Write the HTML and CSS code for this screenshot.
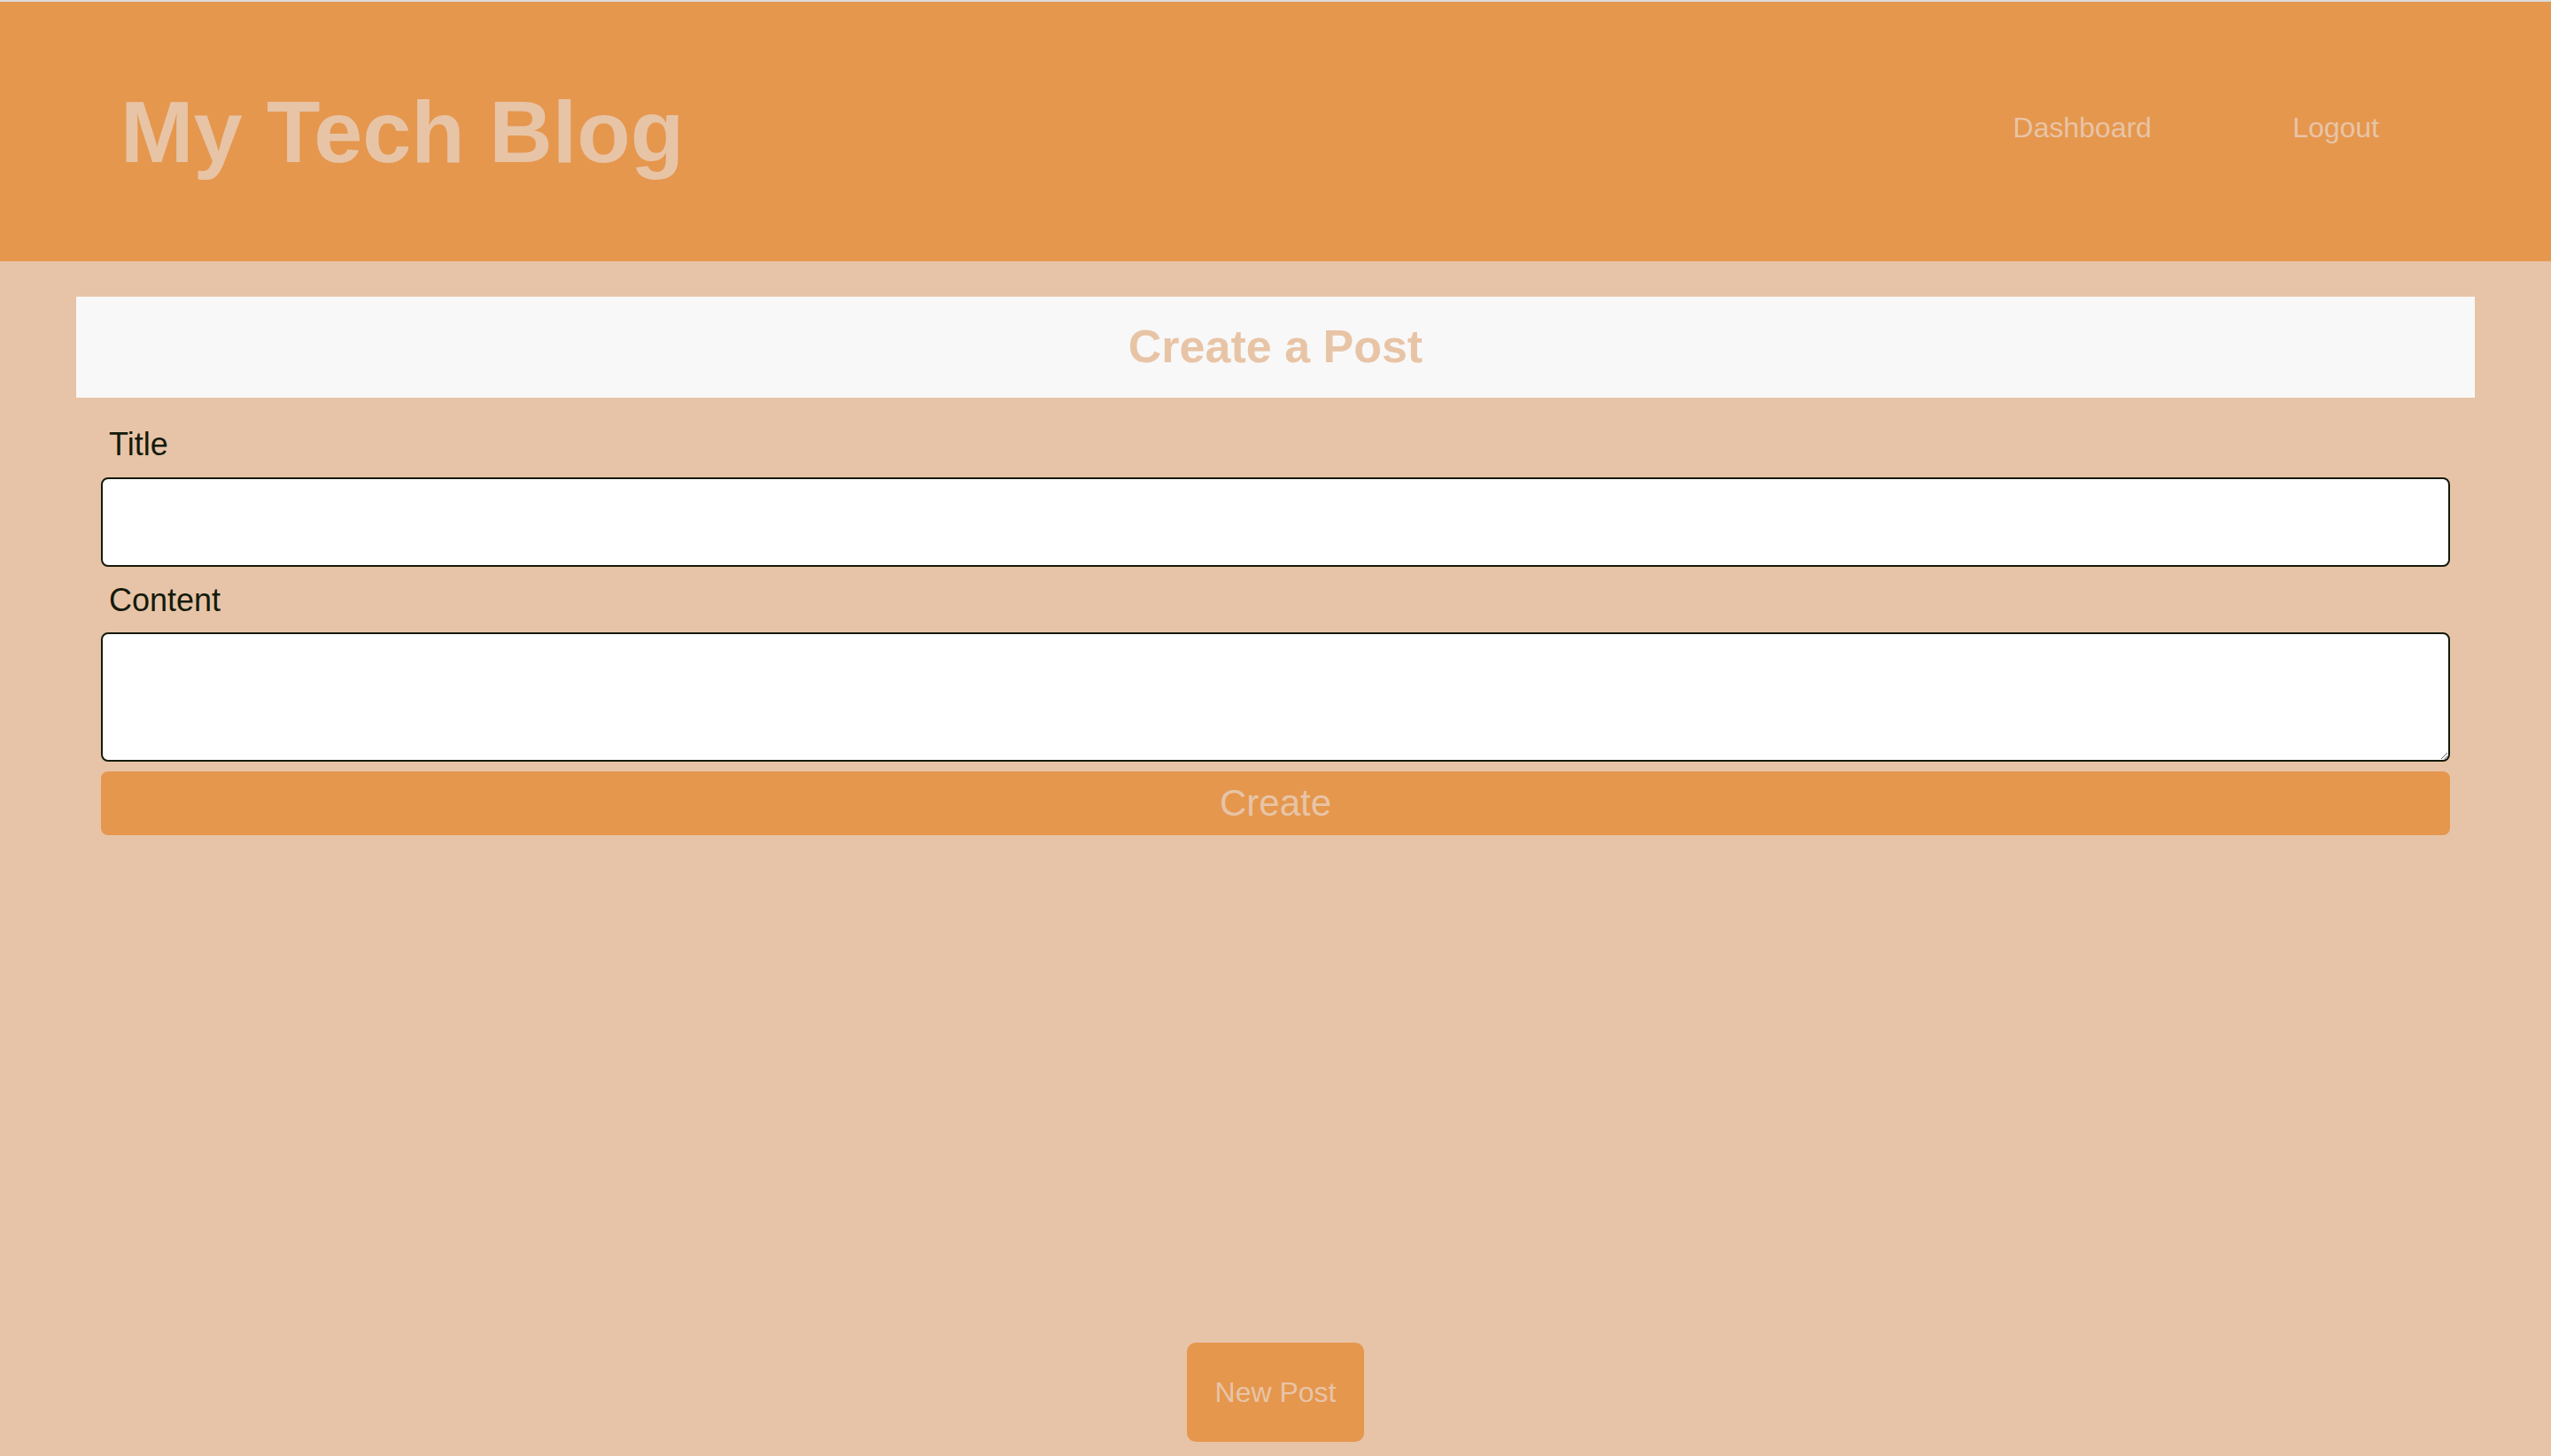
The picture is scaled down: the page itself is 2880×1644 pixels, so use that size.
FILE: index.html
```html
<!DOCTYPE html>
<html lang="en">
<head>
<meta charset="utf-8">
<title>My Tech Blog</title>
<link rel="stylesheet" href="styles.css">
</head>
<body>
  <header class="site-header">
    <h1 class="site-title">My Tech Blog</h1>
    <nav class="site-nav">
      <a class="nav-link" href="#">Dashboard</a>
      <a class="nav-link" href="#">Logout</a>
    </nav>
  </header>
  <main class="main">
    <div class="card-header">
      <h2 class="card-title">Create a Post</h2>
    </div>
    <form class="post-form">
      <label class="form-label label-title" for="title">Title</label>
      <input class="form-input" id="title" type="text">
      <label class="form-label label-content" for="content">Content</label>
      <textarea class="form-textarea" id="content"></textarea>
      <button class="create-btn" type="button">Create</button>
    </form>
  </main>
  <footer class="footer">
    <button class="new-post-btn" type="button">New Post</button>
  </footer>
</body>
</html>
```

FILE: styles.css
```css
* {
  box-sizing: border-box;
}

html {
  height: 100%;
}

body {
  margin: 0;
  min-height: 100vh;
  border-top: 2px solid #dcdcdc;
  background: #e7c4a7;
  font-family: "Liberation Sans", Arial, Helvetica, sans-serif;
  display: flex;
  flex-direction: column;
}

.site-header {
  height: 293px;
  background: #e5974e;
  display: flex;
  align-items: center;
  justify-content: space-between;
  padding: 0 194px 0 136px;
}

.site-title {
  margin: 0;
  font-size: 99px;
  font-weight: 700;
  color: #e8c4a6;
  line-height: normal;
}

.site-nav {
  display: flex;
  gap: 159px;
  margin-bottom: 8px;
}

.nav-link {
  font-size: 32px;
  color: #e8c4a6;
  text-decoration: none;
}

.main {
  padding: 40px 86px 0;
}

.card-header {
  height: 114px;
  background: #f8f8f8;
  display: flex;
  align-items: center;
  justify-content: center;
}

.card-title {
  margin: 0;
  font-size: 52px;
  font-weight: 700;
  color: #e8c4a6;
  padding-bottom: 2px;
}

.post-form {
  padding: 0 28px;
  display: flex;
  flex-direction: column;
}

.form-label {
  display: block;
  height: 40px;
  line-height: 40px;
  font-size: 36px;
  color: #141a0b;
  padding-left: 9px;
}

.label-title {
  margin-top: 33px;
}

.label-content {
  margin-top: 18px;
}

.form-input,
.form-textarea {
  display: block;
  width: 100%;
  border: 2px solid #141a0b;
  border-radius: 8px;
  background: #ffffff;
  font-family: inherit;
  font-size: 32px;
  padding: 8px 12px;
}

.form-input {
  margin-top: 17px;
  height: 101px;
}

.form-textarea {
  margin-top: 16px;
  height: 146px;
  resize: both;
}

.create-btn {
  margin-top: 11px;
  height: 72px;
  width: 100%;
  border: 0;
  border-radius: 8px;
  background: #e5974e;
  color: #e8c4a6;
  font-family: inherit;
  font-size: 42px;
  padding: 0;
}

.footer {
  margin-top: auto;
  display: flex;
  justify-content: center;
  padding-bottom: 16px;
}

.new-post-btn {
  height: 112px;
  width: 200px;
  border: 0;
  border-radius: 10px;
  background: #e5974e;
  color: #e8c4a6;
  font-family: inherit;
  font-size: 32px;
  padding: 0;
}
```
